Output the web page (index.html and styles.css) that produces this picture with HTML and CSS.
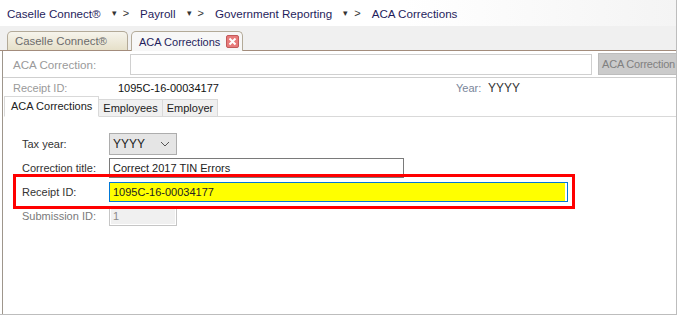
FILE: index.html
```html
<!DOCTYPE html>
<html lang="en">

<head>
    <meta charset="UTF-8">
    <title>ACA Corrections</title>
    <link rel="stylesheet" href="styles.css">
</head>

<body>
    <div id="window">
        <div class="crumbs">
            <span class="crumb">Caselle Connect®</span>
            <span class="drop">&#9662;</span><span class="sep">&gt;</span>
            <span class="crumb">Payroll</span>
            <span class="drop">&#9662;</span><span class="sep">&gt;</span>
            <span class="crumb">Government Reporting</span>
            <span class="drop">&#9662;</span><span class="sep">&gt;</span>
            <span class="crumb">ACA Corrections</span>
        </div>

        <div class="doc_tabs">
            <div class="doc_tab">Caselle Connect®</div>
            <div class="doc_tab active">ACA Corrections
                <svg class="close" width="13" height="13" viewBox="0 0 13 13">
                    <rect x="0.5" y="0.5" width="12" height="12" rx="1.5" fill="#e77a7a" stroke="#c25a5a" />
                    <path d="M3.5 3.5 L9.5 9.5 M9.5 3.5 L3.5 9.5" stroke="#fff" stroke-width="2" />
                </svg>
            </div>
        </div>

        <div class="panel">
            <div class="search_row">
                <span class="dim_label">ACA Correction:</span>
                <div class="search_box"></div>
                <div class="search_btn">ACA Correction</div>
            </div>
            <div class="info_row">
                <span class="dim_label">Receipt ID:</span>
                <span class="info_value">1095C-16-00034177</span>
                <span class="year_label">Year:</span>
                <span class="year_value">YYYY</span>
            </div>
            <div class="sub_tabs">
                <div class="sub_tab active">ACA Corrections</div>
                <div class="sub_tab">Employees</div>
                <div class="sub_tab">Employer</div>
                <div class="sub_fill"></div>
            </div>

            <div class="form">
                <div class="row">
                    <span class="label">Tax year:</span>
                    <div class="select">YYYY
                        <svg width="10" height="6" viewBox="0 0 10 6">
                            <path d="M1 1 L5 5 L9 1" fill="none" stroke="#555" stroke-width="1" />
                        </svg>
                    </div>
                </div>
                <div class="row">
                    <span class="label">Correction title:</span>
                    <div class="text_box title_box">Correct 2017 TIN Errors</div>
                </div>
                <div class="row">
                    <span class="label">Receipt ID:</span>
                    <div class="text_box receipt_box">1095C-16-00034177</div>
                </div>
                <div class="row">
                    <span class="label disabled">Submission ID:</span>
                    <div class="text_box sub_box">1</div>
                </div>
                <div class="highlight"></div>
            </div>
        </div>
    </div>
</body>

</html>
```

FILE: styles.css
```css
body {
    margin: 0;
    font-family: "Liberation Sans", Arial, sans-serif;
    font-size: 11px;
    color: #222;
    background: #fff;
}

#window {
    width: 676px;
    height: 314px;
    border-right: 1px solid #bdbdbd;
    border-bottom: 1px solid #bdbdbd;
    display: flex;
    flex-direction: column;
    overflow: hidden;
}

.crumbs {
    height: 26px;
    display: flex;
    align-items: center;
    padding-left: 7px;
    font-size: 11.6px;
    color: #1f1d5c;
    background: linear-gradient(to right, #fff 60%, #f4f4f4);
}

.drop {
    font-size: 9px;
    color: #333;
    margin-left: 11px;
}

.sep {
    margin: 0 11px 0 6px;
    font-size: 11px;
    color: #333;
}

.doc_tabs {
    height: 24px;
    display: flex;
    align-items: flex-end;
    padding-left: 7px;
    gap: 3px;
    background: #f0f0f0;
    border-bottom: 1px solid #a38c7c;
}

.doc_tab {
    width: 112px;
    height: 18px;
    padding-left: 7px;
    line-height: 18px;
    font-size: 11.4px;
    white-space: nowrap;
    color: #6b6b6b;
    border: 1px solid #b3aa98;
    border-bottom: none;
    border-radius: 5px 5px 0 0;
    background: linear-gradient(#f6f4ec, #e6e0c9);
}

.doc_tab.active {
    width: 103px;
    font-size: 11px;
    color: #1f1d5c;
    background: #f7f7f7;
    display: flex;
    align-items: center;
    margin-bottom: -1px;
    height: 19px;
}

.close {
    margin-left: 6px;
    flex: none;
}

.panel {
    flex: 1;
    margin-left: 2px;
    border-left: 1px solid #9e968c;
    display: flex;
    flex-direction: column;
    position: relative;
}

.search_row {
    height: 26px;
    display: flex;
    align-items: center;
    border-bottom: 1px solid #cfcfcf;
}

.dim_label {
    width: 117px;
    padding-left: 10px;
    color: #9a9a9a;
    font-size: 11.6px;
}

.search_box {
    width: 460px;
    height: 19px;
    border: 1px solid #d0d0d0;
    background: #fff;
}

.search_btn {
    margin-left: 6px;
    flex: 1;
    height: 20px;
    line-height: 20px;
    padding-left: 3px;
    white-space: nowrap;
    font-size: 11px;
    letter-spacing: -0.2px;
    color: #808080;
    background: #cbcbcb;
    border: 1px solid #bdbdbd;
    border-right: none;
}

.info_row {
    height: 19px;
    display: flex;
    align-items: center;
}

.info_row .dim_label {
    width: 105px;
    font-size: 11px;
}

.info_value {
    width: 338px;
    color: #111;
}

.year_label {
    color: #7a869a;
    width: 32px;
}

.year_value {
    font-size: 12px;
    color: #333;
}

.sub_tabs {
    height: 20px;
    display: flex;
    align-items: flex-end;
    padding-left: 1px;
}

.sub_tab {
    height: 16px;
    line-height: 16px;
    padding: 0 4px;
    font-size: 11px;
    color: #222;
    background: #f0f0f0;
    border: 1px solid #d9d9d9;
    border-left: none;
}

.sub_tab.active {
    height: 19px;
    line-height: 18px;
    background: #fff;
    border-left: 1px solid #d9d9d9;
    border-bottom-color: #fff;
    padding: 0 6px;
}

.sub_fill {
    flex: 1;
    border-bottom: 1px solid #d9d9d9;
}

.form {
    position: relative;
    padding: 16px 0 0 19px;
    display: flex;
    flex-direction: column;
    gap: 2px;
}

.row {
    display: flex;
    align-items: center;
    height: 22px;
}

.label {
    width: 87px;
    color: #333;
    font-size: 11px;
}

.label.disabled {
    color: #7a7a7a;
}

.select {
    width: 60px;
    height: 20px;
    padding: 0 3px;
    display: flex;
    align-items: center;
    justify-content: space-between;
    font-size: 12px;
    color: #222;
    background: #e5e5e5;
    border: 1px solid #adadad;
}

.select svg {
    margin-right: 3px;
}

.text_box {
    height: 18px;
    line-height: 18px;
    padding-left: 3px;
    font-size: 11px;
}

.title_box {
    width: 290px;
    border: 1px solid #7a7a7a;
}

.receipt_box {
    width: 454px;
    background: #ffff00;
    border: 1px solid #0078d7;
    box-shadow: inset -2px 0 0 #fff;
}

.sub_box {
    width: 63px;
    color: #8a8a8a;
    background: #f0f0f0;
    border: 1px solid #c6c6c6;
    box-shadow: inset 0 0 0 1px #fff;
}

.highlight {
    position: absolute;
    left: 10px;
    top: 57px;
    width: 556px;
    height: 29px;
    border: 3px solid #ff0000;
}
```
